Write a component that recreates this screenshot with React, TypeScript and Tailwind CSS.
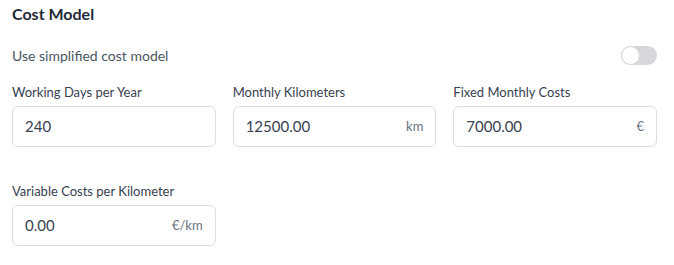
import React, { useState } from 'react';

interface FieldProps {
  label: string;
  value: string;
  suffix?: string;
}

function NumberField({ label, value, suffix }: FieldProps) {
  const [val, setVal] = useState(value);
  return (
    <div className="flex flex-col">
      <label className="text-[13px] leading-5 text-[#374151] mb-1">{label}</label>
      <div className="flex items-center h-[41px] border border-[#dcdde0] rounded-md bg-white px-3">
        <input
          type="text"
          value={val}
          onChange={e => setVal(e.target.value)}
          className="flex-1 min-w-0 bg-transparent text-[15px] text-[#374151] outline-none"
        />
        {suffix && <span className="text-[13px] text-[#6b7280] ml-2">{suffix}</span>}
      </div>
    </div>
  );
}

export default function App() {
  const [simplified, setSimplified] = useState(false);

  return (
    <div className="w-[674px] h-[265px] bg-white pl-3 pr-[17px] pt-0.5 font-['Lato','Liberation_Sans',sans-serif]">
      <h3 className="text-[16px] leading-6 font-bold text-[#1f2937]">Cost Model</h3>

      {/* ── Simplified toggle ── */}
      <div className="flex items-center justify-between mt-5 h-[19px]">
        <span className="text-[14px] text-[#4b5563]">Use simplified cost model</span>
        <button
          type="button"
          onClick={() => setSimplified(s => !s)}
          className={`relative w-[36px] h-[19px] rounded-full ${simplified ? 'bg-[#2563eb]' : 'bg-[#d5d7db]'}`}
        >
          <span
            className={`absolute top-0 w-[19px] h-[19px] rounded-full bg-white border border-[#d5d7db] ${simplified ? 'left-[17px]' : 'left-0'}`}
          />
        </button>
      </div>

      {/* ── Inputs ── */}
      <div className="grid grid-cols-3 gap-x-[17px] gap-y-[34px] mt-[17px]">
        <NumberField label="Working Days per Year" value="240" />
        <NumberField label="Monthly Kilometers" value="12500.00" suffix="km" />
        <NumberField label="Fixed Monthly Costs" value="7000.00" suffix="€" />
        <NumberField label="Variable Costs per Kilometer" value="0.00" suffix="€/km" />
      </div>
    </div>
  );
}
